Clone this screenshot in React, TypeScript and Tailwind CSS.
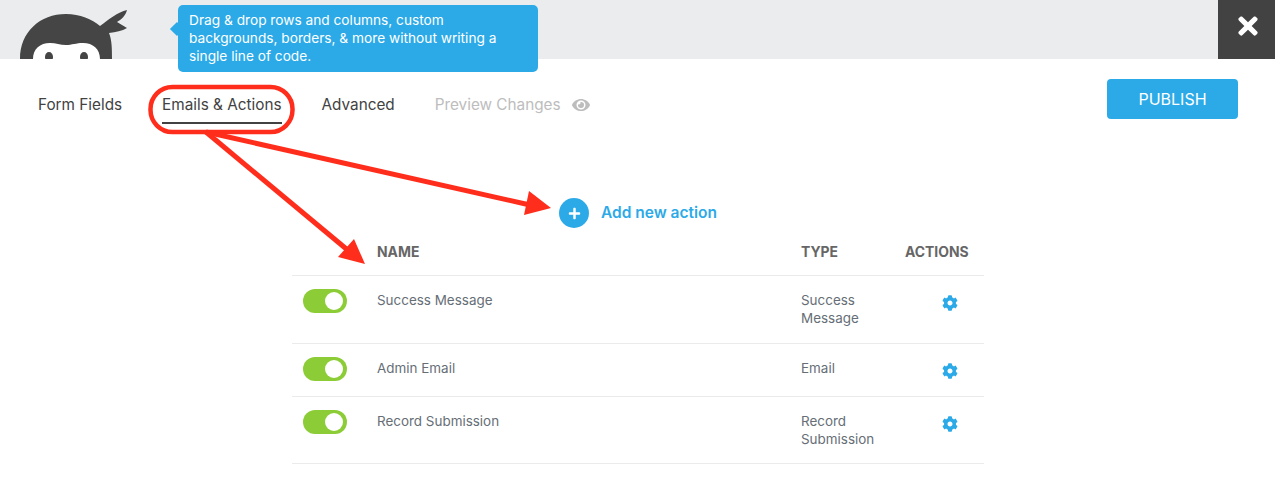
import { FaCog, FaEye, FaPlus, FaTimes } from "react-icons/fa";

const rows = [
  { name: "Success Message", type: "Success Message", h: "h-[68px]" },
  { name: "Admin Email", type: "Email", h: "h-[53px]" },
  { name: "Record Submission", type: "Record Submission", h: "h-[67px]" },
];

const NinjaLogo = () => (
  <svg width="135" height="59" viewBox="0 0 135 59" className="absolute left-0 top-0">
    <path d="M20 59 C20 32 40 14 66 14 C80 14 92 19 100 26 C108 20 118 12 127 10 C126 15 121 20 117 22 L127 28 C122 31 116 32 109 33 C112 40 112 50 112 59 Z" fill="#444544" />
    <path d="M33 59 C33 49 40 43 50 43 C56 43 60 45 66 45 C72 45 76 43 83 43 C93 43 100 49 100 59 Z" fill="#fff" />
    <ellipse cx="49" cy="57" rx="4" ry="5" fill="#444544" />
    <ellipse cx="84" cy="57" rx="4" ry="5" fill="#444544" />
  </svg>
);

const Annotations = () => (
  <svg width="1275" height="493" viewBox="0 0 1275 493" className="absolute left-0 top-0 pointer-events-none">
    <rect x="150.5" y="87" width="142" height="45" rx="22" fill="none" stroke="#ff2d1c" strokeWidth="4.5" />
    <g stroke="#ff2d1c" strokeWidth="5" fill="none">
      <path d="M206 132 L530 205" />
      <path d="M206 132 L350 252" />
    </g>
    <path d="M529 191 L551 208 L524 215 Z" fill="#ff2d1c" />
    <path d="M354 239 L365 264 L338 257 Z" fill="#ff2d1c" />
  </svg>
);

const Toggle = () => (
  <div className="flex h-6 w-11 items-center justify-end rounded-full bg-[#8ccd37] pr-1">
    <div className="h-[18px] w-[18px] rounded-full bg-white" />
  </div>
);

export default function App() {
  return (
    <div className="relative h-[493px] w-[1275px] overflow-hidden bg-white font-['Inter',sans-serif]">
      <header className="relative flex h-[59px] justify-end bg-[#ebecee]">
        <NinjaLogo />
        <button className="flex w-[57px] items-start justify-center bg-[#424242] pl-[2px] pt-[12px] text-white">
          <FaTimes size={28} />
        </button>
      </header>

      <div className="absolute left-[178px] top-[5px] h-[67px] w-[360px] rounded-[5px] bg-[#2caae8] px-[11px] py-[6px] text-[13.7px] leading-[18px] text-white">
        <div className="absolute left-[-6px] top-[19px] h-[10px] w-[10px] rotate-45 bg-[#2caae8]" />
        Drag &amp; drop rows and columns, custom backgrounds, borders, &amp; more without writing a single line of code.
      </div>

      <nav className="flex items-start justify-between pl-[38px] pr-[37px] pt-[20px]">
        <div className="flex items-start gap-[40px] pt-[14px] text-[15.3px] leading-[24px] text-[#424242]">
          <a>Form Fields</a>
          <a className="border-b-2 border-[#424242] pb-[5px]">Emails &amp; Actions</a>
          <a>Advanced</a>
          <a className="flex items-center gap-[11px] text-[#bdbdbd]">
            Preview Changes <FaEye size={18} />
          </a>
        </div>
        <button className="h-10 w-[131px] rounded-[4px] bg-[#2caae8] text-[16px] text-white">PUBLISH</button>
      </nav>

      <div className="ml-[559px] mt-[74px] flex items-center gap-[12px] text-[15.5px] font-semibold text-[#2caae8]">
        <span className="flex h-[30px] w-[30px] items-center justify-center rounded-full bg-[#2caae8] text-white">
          <FaPlus size={13} />
        </span>
        Add new action
      </div>

      <section className="ml-[292px] w-[692px] text-[13.45px] leading-[18px] text-[#666e76]">
        <div className="grid h-[48px] grid-cols-[85px_424px_104px_79px] items-center border-b border-[#ebebeb] text-[13.9px] font-bold text-[#666666]">
          <span />
          <span>NAME</span>
          <span>TYPE</span>
          <span>ACTIONS</span>
        </div>
        {rows.map((row) => (
          <div
            key={row.name}
            className={`grid grid-cols-[85px_424px_104px_79px] border-b border-[#ebebeb] pt-[15px] ${row.h}`}
          >
            <div className="-mt-[2px] pl-[11px]"><Toggle /></div>
            <span>{row.name}</span>
            <span className="w-[80px]">{row.type}</span>
            <span className="pl-[37px] pt-[4px] text-[#2caae8]"><FaCog size={16} /></span>
          </div>
        ))}
      </section>

      <Annotations />
    </div>
  );
}
